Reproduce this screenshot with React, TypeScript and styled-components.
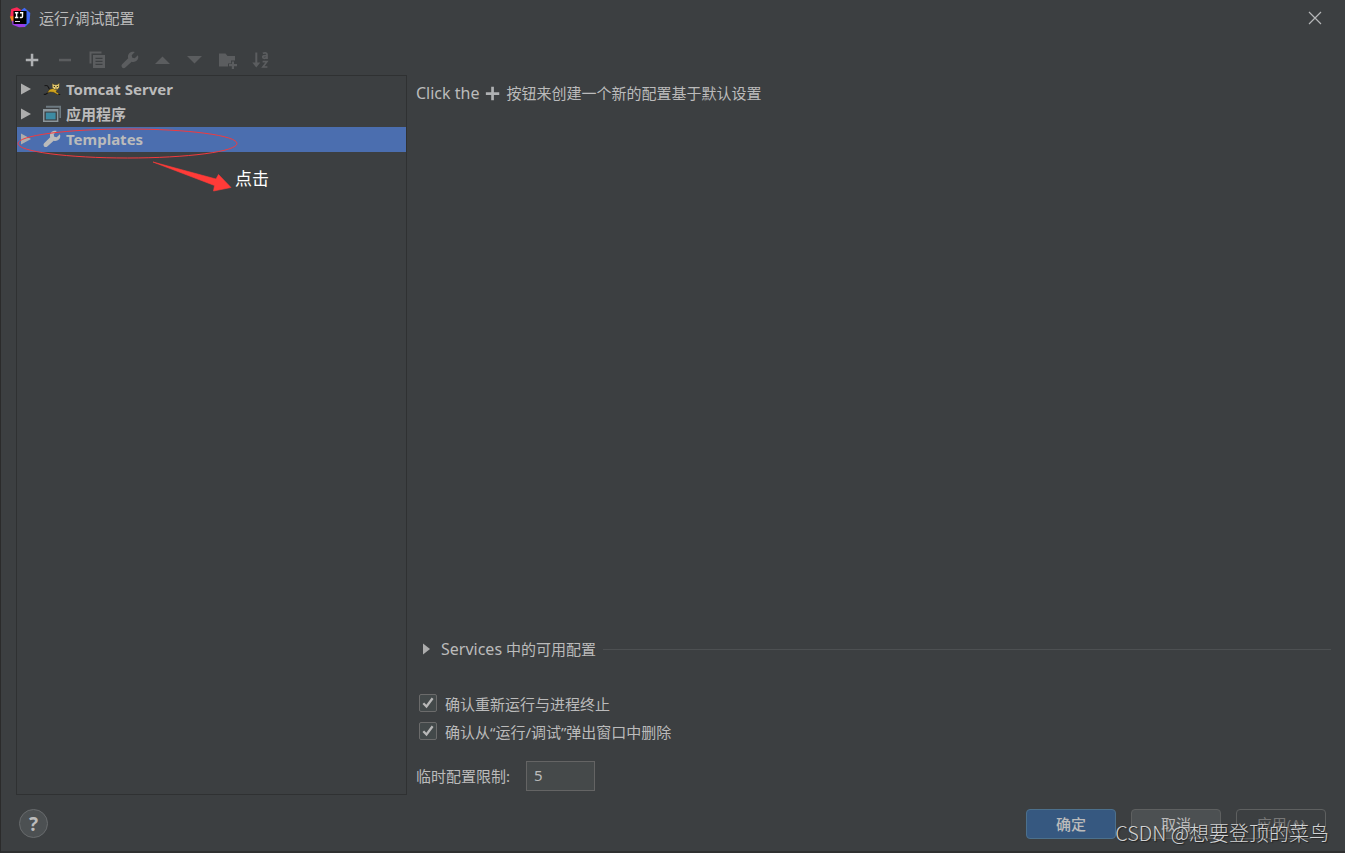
import React from 'react';
import styled, { createGlobalStyle } from 'styled-components';

const GlobalStyle = createGlobalStyle`
  * { box-sizing: border-box; }
  body {
    margin: 0;
    background: #3c3f41;
    color: #bbbbbb;
    font: 15px/20px "Noto Sans", "Noto Sans CJK SC", sans-serif;
  }
  button, input { font: inherit; color: inherit; }
`;

const Dialog = styled.div`
  position: relative;
  display: flex;
  flex-direction: column;
  min-height: 100vh;
  border-left: 1px solid #2b2b2b;
  border-bottom: 2px solid #2f3031;
`;

const TitleBar = styled.header`
  display: flex;
  align-items: center;
  height: 35px;
  padding: 0 14px 0 8px;
`;

const Title = styled.h1`
  flex: 1;
  margin: 0 0 0 8px;
  font-size: 15px;
  font-weight: 400;
`;

const PlainButton = styled.button`
  display: flex;
  align-items: center;
  justify-content: center;
  padding: 0;
  border: 0;
  background: none;
`;

const CloseButton = styled(PlainButton)`
  width: 32px;
  height: 32px;
`;

const Main = styled.main`
  flex: 1;
  display: flex;
  gap: 9px;
  padding: 9px 14px 0 15px;
`;

const Sidebar = styled.section`
  display: flex;
  flex-direction: column;
  width: 391px;
  flex-shrink: 0;
`;

const Toolbar = styled.div`
  display: flex;
  width: 261px;
  height: 31px;
`;

const ToolButton = styled(PlainButton)`
  flex: 1;
  color: #afb1b3;
  &:disabled { color: #5b5d5f; }
`;

const Tree = styled.ul`
  flex: 1;
  margin: 0;
  padding: 1px 0;
  border: 1px solid #2f3132;
  list-style: none;
`;

const TreeRow = styled.li<{ $selected?: boolean }>`
  display: flex;
  align-items: center;
  height: 25px;
  padding: 0 0 2px 4px;
  font-weight: 700;
  background: ${(p) => (p.$selected ? '#4b6eaf' : 'transparent')};
`;

const RowIcon = styled.span`
  display: flex;
  width: 18px;
  margin: 0 5px 0 12px;
`;

const Content = styled.section`
  flex: 1;
  display: flex;
  flex-direction: column;
`;

const Hint = styled.p`
  display: flex;
  align-items: center;
  gap: 6px;
  margin: 39px 0 auto;
`;

const Latin = styled.span`
  font-size: 16px;
`;

const Services = styled.div`
  display: flex;
  align-items: center;
  gap: 7px;
  margin-bottom: 31px;
`;

const ServicesToggle = styled(PlainButton)`
  gap: 11px;
  padding-left: 7px;
`;

const Rule = styled.hr`
  flex: 1;
  margin: 0;
  border: 0;
  border-top: 1px solid #4d5052;
`;

const CheckLabel = styled.label`
  display: flex;
  align-items: center;
  gap: 8px;
  height: 28px;
  padding-left: 3px;
`;

const CheckBox = styled.input`
  appearance: none;
  width: 18px;
  height: 18px;
  margin: 0;
  border: 1px solid #6b6b6b;
  border-radius: 2px;
  background: #43494a;
  grid-area: 1 / 1;
  &:not(:checked) + svg { visibility: hidden; }
`;

const CheckFrame = styled.span`
  display: grid;
  place-items: center;
  padding-bottom: 2px;
  svg { grid-area: 1 / 1; pointer-events: none; }
`;

const LimitRow = styled.div`
  display: flex;
  align-items: center;
  gap: 16px;
  margin: 15px 0 4px;
`;

const LimitInput = styled.input`
  width: 69px;
  height: 30px;
  padding: 0 8px 2px 7px;
  border: 1px solid #646464;
  background: #45494a;
`;

const Footer = styled.footer`
  display: flex;
  align-items: flex-start;
  gap: 15px;
  padding: 14px 19px 12px 18px;
`;

const HelpButton = styled(PlainButton)`
  width: 29px;
  height: 29px;
  margin-right: auto;
  border: 1px solid #686b6d;
  border-radius: 50%;
  background: #4c5052;
  font-size: 19px;
  font-weight: 700;
`;

const DialogButton = styled.button<{ $primary?: boolean }>`
  width: 90px;
  height: 30px;
  padding: 0;
  border: 1px solid ${(p) => (p.$primary ? '#4c708c' : '#5e6060')};
  border-radius: 4px;
  background: ${(p) => (p.$primary ? '#365880' : '#4c5052')};
  font-weight: ${(p) => (p.$primary ? 500 : 400)};
  &:disabled { background: transparent; color: #777777; }
`;

const Markup = styled.div`
  position: absolute;
  top: 124px;
  left: 16px;
  pointer-events: none;
  svg { display: block; }
`;

const MarkupText = styled.span`
  position: absolute;
  top: 43px;
  left: 218px;
  color: #ffffff;
  font-size: 17px;
  line-height: 24px;
  white-space: nowrap;
`;

const Watermark = styled.div`
  position: absolute;
  right: 16px;
  bottom: 4px;
  color: #d2d3d4;
  font: 300 20px/28px "Noto Sans CJK SC", sans-serif;
  text-shadow: 1px 1px 1px #222222;
  pointer-events: none;
`;

const Plus = ({ size = 14 }: { size?: number }) => (
  <svg width={size} height={size} viewBox="0 0 14 14" fill="#afb1b3" aria-hidden="true">
    <path d="M5.800 .8h2.500v5h5v2.500h-5v5H5.800v-5h-5V5.800h5z" />
  </svg>
);

const Wrench = () => (
  <svg width="18" height="18" viewBox="0 0 18 18" aria-hidden="true">
    <path
      fill="currentColor"
      d="M16.9 4.2 13.7 7.3 11.3 6.7 10.7 4.3 13.8 1.1C11.8.3 9.7.8 8.3 2.2 6.9 3.6 6.6 5.5 7.2 7.2L1.1 13.3C.3 14.1.3 15.4 1.1 16.4 2 17.4 3.5 17.3 4.3 16.5L10.7 10.7C12.5 11.3 14.5 10.9 15.8 9.6 17.2 8.2 17.7 6.1 16.9 4.2z"
    />
  </svg>
);

const TreeArrow = () => (
  <svg width="10" height="12" viewBox="0 0 10 12" aria-hidden="true">
    <path d="M0 0.5 10 6 0 11.5z" fill="#adadad" />
  </svg>
);

const CheckMark = () => (
  <svg width="14" height="14" viewBox="0 0 14 14" aria-hidden="true">
    <path d="M2.3 7.2 5.5 10.5 11.6 2.3" fill="none" stroke="#b8b8b8" strokeWidth="2.3" />
  </svg>
);

const Logo = () => (
  <svg width="22" height="21" viewBox="0 0 22 21" aria-hidden="true">
    <path d="M2.200 2 8 .3 13 3.500 9 18 3.500 12 1.300 9z" fill="#fe2857" />
    <path d="M.8 9.500 5 9v7L3 15z" fill="#fc801d" />
    <path d="M12 3.200 15.500 .8l5.800 5.200-.8 9.500L16 20l-5-2z" fill="#4068f5" />
    <path d="M3 13.500 9 16l7 1.500V20l-6 .2-6.500-2.400z" fill="#9b3ee8" />
    <path d="M4.500 4h13v13h-13z" fill="#000" />
    <path d="M5.900 5.700h3.400M7.600 5.700v5M5.900 10.500h3.400M11 5.700h3.300M13.500 5.700v3.800q0 1-1 1h-1.700" fill="none" stroke="#fff" strokeWidth="1.4" />
    <path d="M6 14.500h5" stroke="#ddd" strokeWidth="1" />
  </svg>
);

const Tomcat = () => (
  <svg width="18" height="14" viewBox="0 0 18 14" aria-hidden="true">
    <path d="M1.500 3.800Q4.500 2.800 5.300 5L6.800 8M5.500 10.300 2.500 12.400H.8M13.500 11.500l1.500 1h2.200" fill="none" stroke="#171717" strokeWidth="1.100" />
    <path d="M4.200 11 6.500 7.600 10 6.400l4 1.800-1 1.600 3 1.900-1.200 1L10.500 10.300 7 9.900z" fill="#d2a41e" stroke="#2d2610" strokeWidth=".4" />
    <path d="m9.200 1.200 2 1.500h3L16.400 1l-.2 4.500-1.900 1.900h-2.900L9.300 5.500z" fill="#e8cd72" stroke="#3a3110" strokeWidth=".4" />
    <path d="M10.800 4h1.100v1.100h-1.100zM13.800 4h1.100v1.100h-1.100z" fill="#222" />
    <path d="M12.100 5.800h1.700l-.8 1z" fill="#222" />
  </svg>
);

const Application = () => (
  <svg width="18" height="18" viewBox="0 0 18 18" aria-hidden="true">
    <path d="M3 .8h15V13h-1.600V2.800H3z" fill="#6d7a81" />
    <path fillRule="evenodd" d="M0 4h15.400v13H0zM1.500 6.500v9h12.400v-9z" fill="#8b969c" />
    <path d="M2.800 7.600h9.800v6.800H2.800z" fill="#3d8ba3" />
  </svg>
);

const tools: { label: string; icon: React.ReactNode }[] = [
  { label: '删除', icon: <svg width="14" height="14" viewBox="0 0 14 14"><path d="M1 5.800h12v2.500H1z" fill="currentColor" /></svg> },
  {
    label: '复制',
    icon: (
      <svg width="18" height="18" viewBox="0 0 18 18" fill="currentColor">
        <path d="M.5 .5h12v2h-10v10h-2z" />
        <path fillRule="evenodd" d="M4 4h12v13H4zM6.500 6.800v1.200h7V6.800zM6.500 9.800v1.200h7V9.800zM6.500 12.800v1.200h7v-1.200z" />
      </svg>
    ),
  },
  { label: '编辑模板', icon: <Wrench /> },
  { label: '上移', icon: <svg width="16" height="8" viewBox="0 0 16 8"><path d="M0 8 7.500 .5 15 8z" fill="currentColor" /></svg> },
  { label: '下移', icon: <svg width="16" height="8" viewBox="0 0 16 8"><path d="M0 0h15L7.500 7.500z" fill="currentColor" /></svg> },
  {
    label: '新建文件夹',
    icon: (
      <svg width="18" height="18" viewBox="0 0 18 18" fill="currentColor">
        <path d="M0 2.500h6.500L8.500 5H16v4.500h-4v3H9v3H0z" />
        <path d="M12.800 10.500H15v2.600h3v2.200h-3V18h-2.200v-2.700H10v-2.200h2.800z" />
      </svg>
    ),
  },
  {
    label: '排序',
    icon: (
      <svg width="18" height="18" viewBox="0 0 18 18">
        <path d="M3.300 1.500h2v10h3l-4 5-4-5h3z" fill="currentColor" />
        <path d="M10.800 2.300Q15 1 15 3.500V8M14.900 4.600q-4.200-.2-4.200 1.500 0 1.300 1.600 1.300T14.900 6M10.600 10.700h4.300L10.900 16h4.500" fill="none" stroke="currentColor" strokeWidth="1.700" />
      </svg>
    ),
  },
];

export default function App() {
  return (
    <>
      <GlobalStyle />
      <Dialog>
        <TitleBar>
          <Logo />
          <Title>运行/调试配置</Title>
          <CloseButton aria-label="关闭">
            <svg width="14" height="14" viewBox="0 0 14 14" aria-hidden="true">
              <path d="m1 1 12 12M13 1 1 13" stroke="#b5b7b8" strokeWidth="1.2" />
            </svg>
          </CloseButton>
        </TitleBar>

        <Main>
          <Sidebar>
            <Toolbar>
              <ToolButton aria-label="添加"><Plus /></ToolButton>
              {tools.map((t) => (
                <ToolButton key={t.label} aria-label={t.label} disabled>{t.icon}</ToolButton>
              ))}
            </Toolbar>
            <Tree>
              <TreeRow><TreeArrow /><RowIcon><Tomcat /></RowIcon>Tomcat Server</TreeRow>
              <TreeRow><TreeArrow /><RowIcon><Application /></RowIcon>应用程序</TreeRow>
              <TreeRow $selected><TreeArrow /><RowIcon><Wrench /></RowIcon>Templates</TreeRow>
            </Tree>
          </Sidebar>

          <Content>
            <Hint>
              <Latin>Click the</Latin>
              <Plus size={15} />
              <span>按钮来创建一个新的配置基于默认设置</span>
            </Hint>
            <Services>
              <ServicesToggle aria-expanded="false">
                <svg width="7" height="12" viewBox="0 0 7 12" aria-hidden="true">
                  <path d="M0 .5 7 6 0 11.5z" fill="#adadad" />
                </svg>
                <span><Latin>Services</Latin> 中的可用配置</span>
              </ServicesToggle>
              <Rule />
            </Services>
            <CheckLabel>
              <CheckFrame><CheckBox type="checkbox" defaultChecked /><CheckMark /></CheckFrame>
              确认重新运行与进程终止
            </CheckLabel>
            <CheckLabel>
              <CheckFrame><CheckBox type="checkbox" defaultChecked /><CheckMark /></CheckFrame>
              确认从“运行/调试”弹出窗口中删除
            </CheckLabel>
            <LimitRow>
              <label htmlFor="limit">临时配置限制:</label>
              <LimitInput id="limit" defaultValue="5" />
            </LimitRow>
          </Content>
        </Main>

        <Footer>
          <HelpButton aria-label="帮助">?</HelpButton>
          <DialogButton $primary>确定</DialogButton>
          <DialogButton>取消</DialogButton>
          <DialogButton disabled>应用(A)</DialogButton>
        </Footer>

        <Markup>
          <svg width="230" height="70" viewBox="0 0 230 70" fill="none" aria-hidden="true">
            <ellipse cx="110.500" cy="19.500" rx="109.500" ry="14.500" stroke="#f23a3e" />
            <path d="M136 38 199 55l2.500-4.500L214 63.500 196.500 67l1-5.500z" fill="#ff3b38" stroke="#ff3b38" strokeWidth=".6" />
          </svg>
          <MarkupText>点击</MarkupText>
        </Markup>
        <Watermark>CSDN @想要登顶的菜鸟</Watermark>
      </Dialog>
    </>
  );
}
